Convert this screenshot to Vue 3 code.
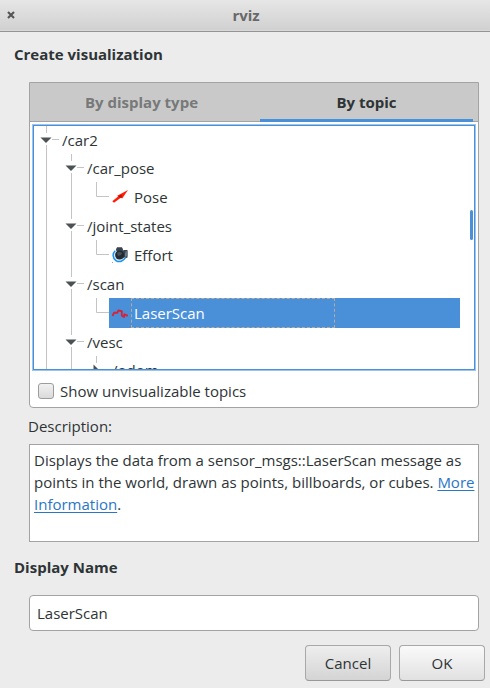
<script setup>
import { ref } from 'vue'

const name = ref('LaserScan')
const showAll = ref(false)

// guides: vertical and horizontal branch segments; arrow: expander shape, in row coordinates
const rows = [
  { label: '/car2', h: 28, w: 29, guides: 'M13.5 0V7M13.5 19V28M19 13.5H26', arrow: 'M7.5 11.5H18.5L13 17Z' },
  { label: '/car_pose', h: 28, w: 54, guides: 'M13.5 0V28M38.5 0V7M38.5 19V28M44 13.5H51', arrow: 'M32.5 11.5H43.5L38 17Z' },
  { label: 'Pose', h: 30, w: 76, icon: 'pose', guides: 'M13.5 0V30M38.5 0V30M63.5 0V14.5H76' },
  { label: '/joint_states', h: 28, w: 54, guides: 'M13.5 0V28M38.5 0V7M38.5 19V28M44 13.5H51', arrow: 'M32.5 11.5H43.5L38 17Z' },
  { label: 'Effort', h: 30, w: 76, icon: 'effort', guides: 'M13.5 0V30M38.5 0V30M63.5 0V14.5H76' },
  { label: '/scan', h: 28, w: 54, guides: 'M13.5 0V28M38.5 0V7M38.5 19V28M44 13.5H51', arrow: 'M32.5 11.5H43.5L38 17Z' },
  { label: 'LaserScan', h: 30, w: 76, icon: 'scan', selected: true, guides: 'M13.5 0V30M38.5 0V30M63.5 0V14.5H76' },
  { label: '/vesc', h: 28, w: 54, guides: 'M13.5 0V28M38.5 0V7M38.5 19V28M44 13.5H51', arrow: 'M32.5 11.5H43.5L38 17Z' },
  { label: '/odom', h: 28, w: 79, guides: 'M13.5 0V28M38.5 0V28M63.5 0V7M69 13.5H76', arrow: 'M60.5 8.5V19.5L66 14Z' },
]
</script>

<template>
  <div class="dialog">
    <header class="titlebar">
      <svg class="close" width="8" height="8" viewBox="0 0 8 8"><path d="M1 1L7 7M7 1L1 7" /></svg>
      <span class="title">rviz</span>
    </header>

    <h1 class="heading first">Create visualization</h1>

    <section class="panel">
      <nav class="tabs">
        <button class="tab">By display type</button>
        <button class="tab active">By topic</button>
      </nav>
      <div class="tree">
        <div v-for="r in rows" :key="r.label" class="row" :class="{ tall: r.icon, selected: r.selected }">
          <svg class="branch" :width="r.w" :height="r.h">
            <path class="guide" :d="r.guides" />
            <path v-if="r.arrow" class="arrow" :d="r.arrow" />
          </svg>
          <div class="item">
            <svg v-if="r.icon" class="icon" width="16" height="16" viewBox="0 0 16 16">
              <g v-if="r.icon === 'pose'">
                <path d="M0.3 12.2L6 7.6L5.2 6.8L16 1L10.2 9.4L8.8 8.7L2 13.8Z" fill="#ff1e08" />
                <path d="M6.4 7L9.6 5.6L9.8 8.8L7.5 8.5Z" fill="#b81205" />
              </g>
              <g v-else-if="r.icon === 'effort'">
                <path d="M4 3L5 0.5H10L11 3H15.5V10.5L12 12L8 13.5L3.5 11Z" fill="#37434e" />
                <path d="M12 4H15.5V9.5H13Z" fill="#65717b" />
                <circle cx="7.5" cy="8.2" r="6.2" fill="#dbe8f2" />
                <path d="M4 3.2L5 0.5H10L11 3.5L13.5 4V10L11 11Z" fill="#37434e" />
                <circle cx="7.6" cy="8" r="4.5" fill="#222b32" />
                <path d="M5 6Q7.5 4 10 6L9 8L6 9Z" fill="#46515a" />
                <path d="M3.2 3.8A6.2 6.2 0 1 0 13.2 10.5" fill="none" stroke="#1694ee" stroke-width="1.5" />
                <path d="M0 15.5H1" stroke="#999" />
              </g>
              <path v-else d="M0.4 11L2 7.8L5.3 7.8L6.4 5.5L9.8 6.2L9.8 10.6L12 11.9L12.4 9.3L15.8 10.8" fill="none" stroke="#d4233b" stroke-width="1.9" stroke-linejoin="round" />
            </svg>
            <span class="label">{{ r.label }}</span>
          </div>
        </div>
        <div class="scrollbar"></div>
      </div>
      <label class="option">
        <input v-model="showAll" type="checkbox" class="check" />
        <span>Show unvisualizable topics</span>
      </label>
    </section>

    <div class="caption">Description:</div>
    <div class="description">
      Displays the data from a sensor_msgs::LaserScan message as points in the world, drawn as points, billboards, or cubes. <a class="link">More Information</a>.
    </div>

    <h2 class="heading second">Display Name</h2>
    <input v-model="name" class="name" type="text" />

    <footer class="buttons">
      <button class="button cancel">Cancel</button>
      <button class="button">OK</button>
    </footer>
  </div>
</template>

<style>
body {
  background: #ececec;
}
</style>

<style scoped>
* {
  box-sizing: border-box;
}
.dialog {
  width: 490px;
  height: 688px;
  overflow: hidden;
  background: #ececec;
  color: #2e3436;
  font: 15px/22px 'Open Sans', 'Noto Sans', sans-serif;
}
button,
input {
  font: inherit;
  color: inherit;
}
.titlebar {
  display: grid;
  grid-template-columns: 30px 1fr 28px;
  align-items: center;
  height: 32px;
  background: linear-gradient(#e6e6e6, #d0d0d0);
  border-bottom: 1px solid #949494;
  box-shadow: inset 0 -1px #d9d9d9;
}
.close {
  margin: 0 0 2px 7px;
  fill: none;
  stroke: #555;
  stroke-width: 2.1;
}
.title {
  padding-bottom: 2px;
  text-align: center;
  font-weight: 700;
  color: #686868;
}
.heading {
  margin: 0;
  padding-left: 14px;
  font-size: 15px;
  line-height: 22px;
  font-weight: 700;
}
.first {
  margin-top: 11px;
}
.panel {
  width: 450px;
  height: 326px;
  margin: 17px 0 0 29px;
  background: #fff;
  border: 1px solid #a3a3a3;
  border-radius: 0 0 4px 4px;
}
.tabs {
  display: grid;
  grid-template-columns: 1fr 213px;
  padding: 0 5px 0 0;
  height: 39px;
  background: #c9c9c9;
  box-shadow: inset 0 -1px #a3a3a3;
}
.tab {
  padding: 2px 0 0;
  border: 0;
  border-bottom: 3px solid transparent;
  background: none;
  font-weight: 700;
  color: #777979;
}
.tab:first-child {
  padding-right: 7px;
}
.active {
  border-color: #4a90d9;
  color: #2e3436;
}
.tree {
  position: relative;
  width: 442px;
  height: 245px;
  margin: 3px 0 0 3px;
  padding-right: 14px;
  border: 1px solid #4a90d9;
  outline: 1px solid #9dc4ec;
  overflow: hidden;
}
.row {
  display: flex;
  height: 28px;
  margin-left: -1px;
}
.tall {
  height: 30px;
}
.branch {
  flex: none;
}
.guide {
  fill: none;
  stroke: #c4c4c4;
}
.arrow {
  fill: #4c5254;
}
.item {
  flex: 1;
  display: flex;
  align-items: center;
}
.tall .item {
  padding-left: 3px;
}
.icon {
  flex: none;
  margin-right: 3px;
}
.label {
  line-height: 28px;
}
.tall .label {
  padding-left: 3px;
}
.selected .item {
  background: #4a90d9;
  color: #fff;
}
.selected .label {
  width: 204px;
  height: 30px;
  padding-left: 2px;
  border: 1px dashed #b5aba0;
}
.scrollbar {
  position: absolute;
  right: 1px;
  top: 84px;
  width: 3px;
  height: 30px;
  border-radius: 1.5px;
  background: #4a90d9;
}
.option {
  display: flex;
  align-items: center;
  gap: 6px;
  margin: 10px 0 0 8px;
}
.check {
  appearance: none;
  width: 16px;
  height: 16px;
  margin: 0;
  border: 1px solid #9c9c9c;
  border-radius: 3px;
  background: linear-gradient(#f1f1f1, #dadada);
}
.caption {
  margin: 7px 0 0 28px;
}
.description {
  width: 450px;
  height: 98px;
  margin: 7px 0 0 29px;
  padding: 4px 2px 4px 4px;
  background: #fff;
  border: 1px solid #a3a3a3;
}
.link {
  color: #2a76c6;
  text-decoration: underline;
  text-decoration-thickness: 1px;
  text-underline-offset: 2px;
  text-decoration-skip-ink: none;
}
.second {
  margin-top: 14px;
}
.name {
  display: block;
  width: 450px;
  height: 36px;
  margin: 17px 0 0 29px;
  padding: 0 7px;
  border: 1px solid #a3a3a3;
  border-radius: 4px;
  background: #fff;
}
.buttons {
  display: flex;
  justify-content: flex-end;
  gap: 8px;
  padding: 14px 5px 0 0;
}
.button {
  width: 86px;
  height: 36px;
  padding: 0;
  border: 1px solid #a8a8a8;
  border-bottom-color: #989898;
  border-radius: 4px;
  background: linear-gradient(#fafafa, #e1e1e1);
}
.cancel {
  background: linear-gradient(#eeeeee, #d4d4d4);
}
</style>
